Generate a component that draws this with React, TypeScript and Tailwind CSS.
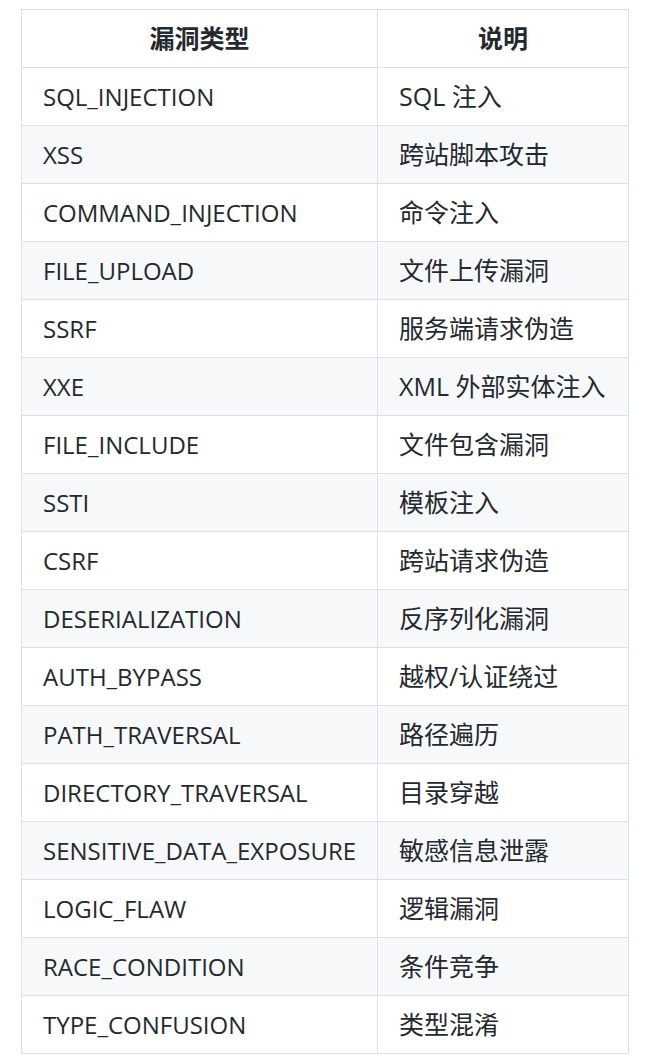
import React from 'react';

interface VulnRow {
  type: string;
  desc: string;
}

const rows: VulnRow[] = [
  { type: 'SQL_INJECTION', desc: 'SQL 注入' },
  { type: 'XSS', desc: '跨站脚本攻击' },
  { type: 'COMMAND_INJECTION', desc: '命令注入' },
  { type: 'FILE_UPLOAD', desc: '文件上传漏洞' },
  { type: 'SSRF', desc: '服务端请求伪造' },
  { type: 'XXE', desc: 'XML 外部实体注入' },
  { type: 'FILE_INCLUDE', desc: '文件包含漏洞' },
  { type: 'SSTI', desc: '模板注入' },
  { type: 'CSRF', desc: '跨站请求伪造' },
  { type: 'DESERIALIZATION', desc: '反序列化漏洞' },
  { type: 'AUTH_BYPASS', desc: '越权/认证绕过' },
  { type: 'PATH_TRAVERSAL', desc: '路径遍历' },
  { type: 'DIRECTORY_TRAVERSAL', desc: '目录穿越' },
  { type: 'SENSITIVE_DATA_EXPOSURE', desc: '敏感信息泄露' },
  { type: 'LOGIC_FLAW', desc: '逻辑漏洞' },
  { type: 'RACE_CONDITION', desc: '条件竞争' },
  { type: 'TYPE_CONFUSION', desc: '类型混淆' },
];

const App: React.FC = () => {
  return (
    <div className="min-h-[1062px] bg-white pt-[9px] pl-[21px] font-['Open_Sans','Noto_Sans_CJK_SC',sans-serif] text-[#24292f]">
      <table className="w-[607px] table-fixed border-collapse text-[24px]">
        <colgroup>
          <col className="w-[356px]" />
          <col className="w-[251px]" />
        </colgroup>
        <thead>
          <tr className="h-[58px] bg-white">
            <th className="border border-[#dde1e5] px-[22px] text-center text-[25px] font-bold">漏洞类型</th>
            <th className="border border-[#dde1e5] px-[22px] text-center text-[25px] font-bold">说明</th>
          </tr>
        </thead>
        <tbody>
          {rows.map((row, i) => (
            <tr key={row.type} className={`h-[58px] ${i % 2 === 1 ? 'bg-[#f6f8fa]' : 'bg-white'}`}>
              <td className="border border-[#dde1e5] px-[21px] whitespace-nowrap">{row.type}</td>
              <td className="border border-[#dde1e5] px-[21px] whitespace-nowrap text-[25px]">{row.desc}</td>
            </tr>
          ))}
        </tbody>
      </table>
    </div>
  );
};

export default App;
